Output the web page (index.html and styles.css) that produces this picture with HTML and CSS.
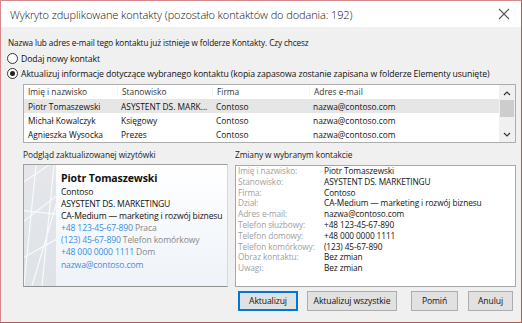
FILE: index.html
```html
<!DOCTYPE html>
<html lang="pl">
<head>
<meta charset="utf-8">
<link rel="stylesheet" href="styles.css">
</head>
<body>
<div class="dialog">
  <div class="titlebar">
    <span class="title">Wykryto zduplikowane kontakty (pozostało kontaktów do dodania: 192)</span>
    <svg class="close" width="12" height="12" viewBox="0 0 12 12"><path d="M1 1L11 11M11 1L1 11" stroke="#555" stroke-width="1.1" fill="none"/></svg>
  </div>
  <div class="body">
    <p class="intro">Nazwa lub adres e-mail tego kontaktu już istnieje w folderze Kontakty. Czy chcesz</p>
    <div class="radio"><span class="rb"></span><span>Dodaj nowy kontakt</span></div>
    <div class="radio"><span class="rb checked"></span><span>Aktualizuj informacje dotyczące wybranego kontaktu (kopia zapasowa zostanie zapisana w folderze Elementy usunięte)</span></div>
    <div class="table">
      <div class="grid">
        <div class="row head"><span>Imię i nazwisko</span><span>Stanowisko</span><span>Firma</span><span>Adres e-mail</span></div>
        <div class="row sel"><span>Piotr Tomaszewski</span><span>ASYSTENT DS. MARK...</span><span>Contoso</span><span>nazwa@contoso.com</span></div>
        <div class="row"><span>Michał Kowalczyk</span><span>Księgowy</span><span>Contoso</span><span>nazwa@contoso.com</span></div>
        <div class="row"><span>Agnieszka Wysocka</span><span>Prezes</span><span>Contoso</span><span>nazwa@contoso.com</span></div>
      </div>
      <div class="scrollbar">
        <svg class="arrow" width="8" height="6" viewBox="0 0 8 6"><path d="M1 5L4 2L7 5" stroke="#333" stroke-width="1.2" fill="none"/></svg>
        <div class="track"><div class="thumb"></div></div>
        <svg class="arrow" width="8" height="6" viewBox="0 0 8 6"><path d="M1 1L4 4L7 1" stroke="#333" stroke-width="1.2" fill="none"/></svg>
      </div>
    </div>
    <div class="panels">
      <div class="panel left">
        <div class="plabel">Podgląd zaktualizowanej wizytówki</div>
        <div class="card">
          <div class="deco">
            <svg width="32" height="121" viewBox="0 0 32 121" preserveAspectRatio="none">
              <path d="M-5 20L40 -10M-5 60L40 25M0 121L12 0M18 121L30 0M-5 95L40 70M-5 45L40 50M8 121L38 20" stroke="#fff" stroke-width="1.2" fill="none" opacity="0.8"/>
            </svg>
          </div>
          <div class="cinfo">
            <div class="cname">Piotr Tomaszewski</div>
            <div>Contoso</div>
            <div>ASYSTENT DS. MARKETINGU</div>
            <div>CA-Medium — marketing i rozwój biznesu</div>
            <div><span class="blue">+48 123-45-67-890</span> <span class="gray">Praca</span></div>
            <div><span class="blue">(123) 45-67-890</span> <span class="gray">Telefon komórkowy</span></div>
            <div><span class="blue">+48 000 0000 1111</span> <span class="gray">Dom</span></div>
            <div><span class="blue">nazwa@contoso.com</span></div>
          </div>
        </div>
      </div>
      <div class="panel right">
        <div class="plabel">Zmiany w wybranym kontakcie</div>
        <div class="changes">
          <span class="k">Imię i nazwisko:</span><span class="v">Piotr Tomaszewski</span>
          <span class="k">Stanowisko:</span><span class="v">ASYSTENT DS. MARKETINGU</span>
          <span class="k">Firma:</span><span class="v">Contoso</span>
          <span class="k">Dział:</span><span class="v">CA-Medium — marketing i rozwój biznesu</span>
          <span class="k">Adres e-mail:</span><span class="v">nazwa@contoso.com</span>
          <span class="k">Telefon służbowy:</span><span class="v">+48 123-45-67-890</span>
          <span class="k">Telefon domowy:</span><span class="v">+48 000 0000 1111</span>
          <span class="k">Telefon komórkowy:</span><span class="v">(123) 45-67-890</span>
          <span class="k">Obraz kontaktu:</span><span class="v">Bez zmian</span>
          <span class="k">Uwagi:</span><span class="v">Bez zmian</span>
        </div>
      </div>
    </div>
    <div class="buttons">
      <button class="btn default b1">Aktualizuj</button>
      <button class="btn b2">Aktualizuj wszystkie</button>
      <button class="btn b3">Pomiń</button>
      <button class="btn b4">Anuluj</button>
    </div>
  </div>
</div>
</body>
</html>
```

FILE: styles.css
```css
* { box-sizing: border-box; }
html, body { margin: 0; padding: 0; }
body {
  width: 522px; height: 323px; overflow: hidden;
  font-family: "Open Sans", "Noto Sans", sans-serif;
  color: #111;
  background: #fff;
}
.dialog {
  width: 522px; height: 323px;
  border: 1px solid #d48a8a;
  border-right-color: #b05a5a;
  border-bottom-color: #b05a5a;
  display: flex; flex-direction: column;
  background: #f0f0f0;
}
.titlebar {
  height: 26px; background: #fff;
  display: flex; align-items: center; justify-content: space-between;
  padding: 0 11px 0 9px;
}
.title { font-size: 11px; font-weight: 300; color: #111; letter-spacing: -0.1px; }
.close { display: block; }
.body {
  flex: 1; display: flex; flex-direction: column;
  padding: 9px 5px 0 6px;
  font-size: 8.7px;
}
.intro { margin: 0 0 0 1px; height: 14px; line-height: 14px; font-size: 8.2px; letter-spacing: -0.1px; }
.radio {
  display: flex; align-items: center; gap: 3px; height: 15px; margin-top: 1px;
  letter-spacing: -0.1px;
}
.radio + .radio { margin-top: 0; }
.rb {
  width: 11px; height: 11px; border-radius: 50%; border: 1px solid #333; background: #fff;
  display: flex; align-items: center; justify-content: center; flex: none;
}
.rb.checked::after { content: ""; width: 5px; height: 5px; border-radius: 50%; background: #222; }
.table {
  margin: 3px 0 0 16px; height: 59px;
  border: 1px solid #adadad; background: #fff;
  display: flex; font-size: 8.4px;
}
.grid { flex: 1; display: flex; flex-direction: column; }
.row {
  display: grid; grid-template-columns: 93px 95px 97px 1fr;
  height: 14.5px; align-items: center;
}
.row span { padding-left: 4px; white-space: nowrap; }
.row.head { height: 14px; color: #333; }
.row.head span + span { border-left: 1px solid #f3f3f3; }
.row.sel { background: #e6e6e6; }
.scrollbar { width: 16px; display: flex; flex-direction: column; align-items: center; background: #f0f0f0; }
.arrow { margin: 5px 0 4px; }
.track { flex: 1; width: 100%; }
.thumb { height: 17px; background: #cdcdcd; margin: 0 1px; }
.panels { display: flex; margin: 5px 0 0 16px; height: 139px; }
.panel { display: flex; flex-direction: column; }
.panel.left { width: 205px; }
.panel.right { flex: 1; margin-left: 7px; }
.plabel { height: 17px; line-height: 10px; padding-top: 2px; color: #222; font-size: 8.4px; letter-spacing: -0.1px; }
.card {
  flex: 1; display: flex;
  border: 1px solid #a0a0a0; border-right-color: #d8d8d8; border-bottom-color: #8f8f8f;
  background: linear-gradient(180deg, #ffffff 0%, #eef3f9 100%);
}
.deco { width: 32px; flex: none; background: linear-gradient(180deg, #e4e6ea, #dfe3e8); overflow: hidden; }
.deco svg { display: block; width: 32px; height: 100%; }
.cinfo { padding: 6px 0 0 5px; line-height: 12.1px; font-size: 8.6px; white-space: nowrap; letter-spacing: -0.15px; }
.cname { font-size: 10.5px; font-weight: 700; line-height: 15px; margin-bottom: 0; letter-spacing: -0.1px; }
.blue { color: #3b8fe0; }
.gray { color: #888; }
.changes {
  flex: 1; background: #fff; border: 1px solid #a8a8a8;
  display: grid; grid-template-columns: 86px 1fr; grid-auto-rows: 10.8px;
  align-content: start; padding: 0 0 0 2px; font-size: 8.3px; line-height: 10.8px;
  letter-spacing: -0.1px;
}
.k { color: #a0a0a0; white-space: nowrap; }
.v { color: #111; white-space: nowrap; }
.buttons { display: flex; justify-content: flex-end; margin: 4px 3px 0 0; }
.btn {
  height: 20px; font: inherit; font-size: 8.6px; color: #111;
  background: #e1e1e1; border: 1px solid #adadad; padding: 0; letter-spacing: -0.1px;
}
.btn.default { border-color: #0078d7; box-shadow: inset 0 0 0 1px #0078d7; }
.b1 { width: 60px; }
.b2 { width: 90px; margin-left: 9px; }
.b3 { width: 47px; margin-left: 14px; }
.b4 { width: 45px; margin-left: 10px; }
```
